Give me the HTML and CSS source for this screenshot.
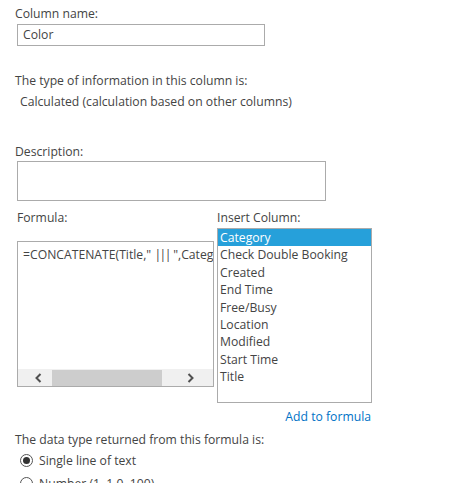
FILE: index.html
```html
<!DOCTYPE html>
<html>
<head>
<meta charset="utf-8">
<link rel="stylesheet" href="styles.css">
</head>
<body>
<div class="page">
  <div class="label first">Column name:</div>
  <div class="textbox name-box">Color</div>

  <div class="label type-label">The type of information in this column is:</div>
  <div class="type-value">Calculated (calculation based on other columns)</div>

  <div class="label desc-label">Description:</div>
  <div class="textbox desc-box"></div>

  <div class="formula-row">
    <div class="formula-col">
      <div class="label">Formula:</div>
      <div class="formula-box">
        <div class="formula-text">=CONCATENATE(Title," <span class="bars">|||</span> ",Category)</div>
        <div class="hscroll">
          <span class="arrow">
            <svg width="9" height="10" viewBox="0 0 9 10"><path d="M6.5 1 L2.5 5 L6.5 9" fill="none" stroke="#505050" stroke-width="2"/></svg>
          </span>
          <span class="thumb"></span>
          <span class="track"></span>
          <span class="arrow">
            <svg width="9" height="10" viewBox="0 0 9 10"><path d="M2.5 1 L6.5 5 L2.5 9" fill="none" stroke="#505050" stroke-width="2"/></svg>
          </span>
        </div>
      </div>
    </div>
    <div class="insert-col">
      <div class="label">Insert Column:</div>
      <div class="listbox">
        <div class="opt selected">Category</div>
        <div class="opt">Check Double Booking</div>
        <div class="opt">Created</div>
        <div class="opt">End Time</div>
        <div class="opt">Free/Busy</div>
        <div class="opt">Location</div>
        <div class="opt">Modified</div>
        <div class="opt">Start Time</div>
        <div class="opt">Title</div>
      </div>
      <a class="add-link">Add to formula</a>
    </div>
  </div>

  <div class="label return-label">The data type returned from this formula is:</div>
  <div class="radio-row"><span class="radio checked"></span><span>Single line of text</span></div>
  <div class="radio-row"><span class="radio"></span><span>Number (1, 1.0, 100)</span></div>
</div>
</body>
</html>
```
FILE: styles.css
```css
html, body {
  margin: 0;
  padding: 0;
  background: #fff;
}
body {
  font-family: "Open Sans", "Noto Sans", sans-serif;
  font-size: 12.2px;
  line-height: 17px;
  color: #444;
  overflow: hidden;
  height: 483px;
}
.page {
  padding: 5px 0 0 15px;
}
.label {
  white-space: nowrap;
}
.textbox {
  box-sizing: border-box;
  border: 1px solid #ababab;
  margin-left: 2px;
  background: #fff;
}
.name-box {
  margin-top: 2px;
  width: 248px;
  height: 22px;
  padding: 1px 0 0 5px;
  line-height: 18px;
}
.type-label {
  margin-top: 26px;
}
.type-value {
  margin-top: 4px;
  padding-left: 5px;
}
.desc-label {
  margin-top: 33px;
}
.desc-box {
  margin-top: 1px;
  width: 309px;
  height: 40px;
}
.formula-row {
  display: flex;
  margin-top: 8px;
  margin-left: 2px;
}
.formula-col {
  width: 200px;
}
.formula-box {
  box-sizing: border-box;
  margin-top: 15px;
  width: 197px;
  height: 146px;
  border: 1px solid #ababab;
  display: flex;
  flex-direction: column;
  overflow: hidden;
}
.formula-text {
  flex: 1;
  padding: 4px 0 0 5px;
  white-space: nowrap;
  overflow: hidden;
}
.bars {
  letter-spacing: -1.5px;
}
.hscroll {
  height: 17px;
  background: #f0f0f0;
  display: flex;
  align-items: center;
}
.arrow {
  width: 17px;
  height: 17px;
  display: flex;
  align-items: center;
  justify-content: center;
  flex: none;
}
.hscroll .arrow:first-child {
  margin-left: 12px;
}
.thumb {
  width: 110px;
  height: 16px;
  background: #cdcdcd;
  margin-left: 5px;
}
.track {
  flex: 1;
}
.hscroll .arrow:last-child {
  margin-right: 14px;
}
.insert-col {
  width: 155px;
  display: flex;
  flex-direction: column;
}
.listbox {
  box-sizing: border-box;
  margin-top: 2px;
  width: 155px;
  height: 175px;
  border: 1px solid #ababab;
  padding: 0;
}
.opt {
  height: 17.4px;
  line-height: 18px;
  padding-left: 2px;
  white-space: nowrap;
  color: #444;
}
.opt.selected {
  background: #26a0da;
  color: #fff;
}
.add-link {
  align-self: flex-end;
  margin-top: 5px;
  margin-right: 1px;
  color: #0072c6;
  text-decoration: none;
}
.return-label {
  margin-top: 6px;
}
.radio-row {
  display: flex;
  align-items: center;
  height: 22px;
  margin-top: 1px;
  padding-left: 5px;
  white-space: nowrap;
}
.radio {
  box-sizing: border-box;
  width: 13px;
  height: 13px;
  border: 1px solid #555;
  border-radius: 50%;
  margin-right: 6px;
  position: relative;
  flex: none;
}
.radio.checked::after {
  content: "";
  position: absolute;
  left: 2px;
  top: 2px;
  width: 7px;
  height: 7px;
  border-radius: 50%;
  background: #333;
}
```
